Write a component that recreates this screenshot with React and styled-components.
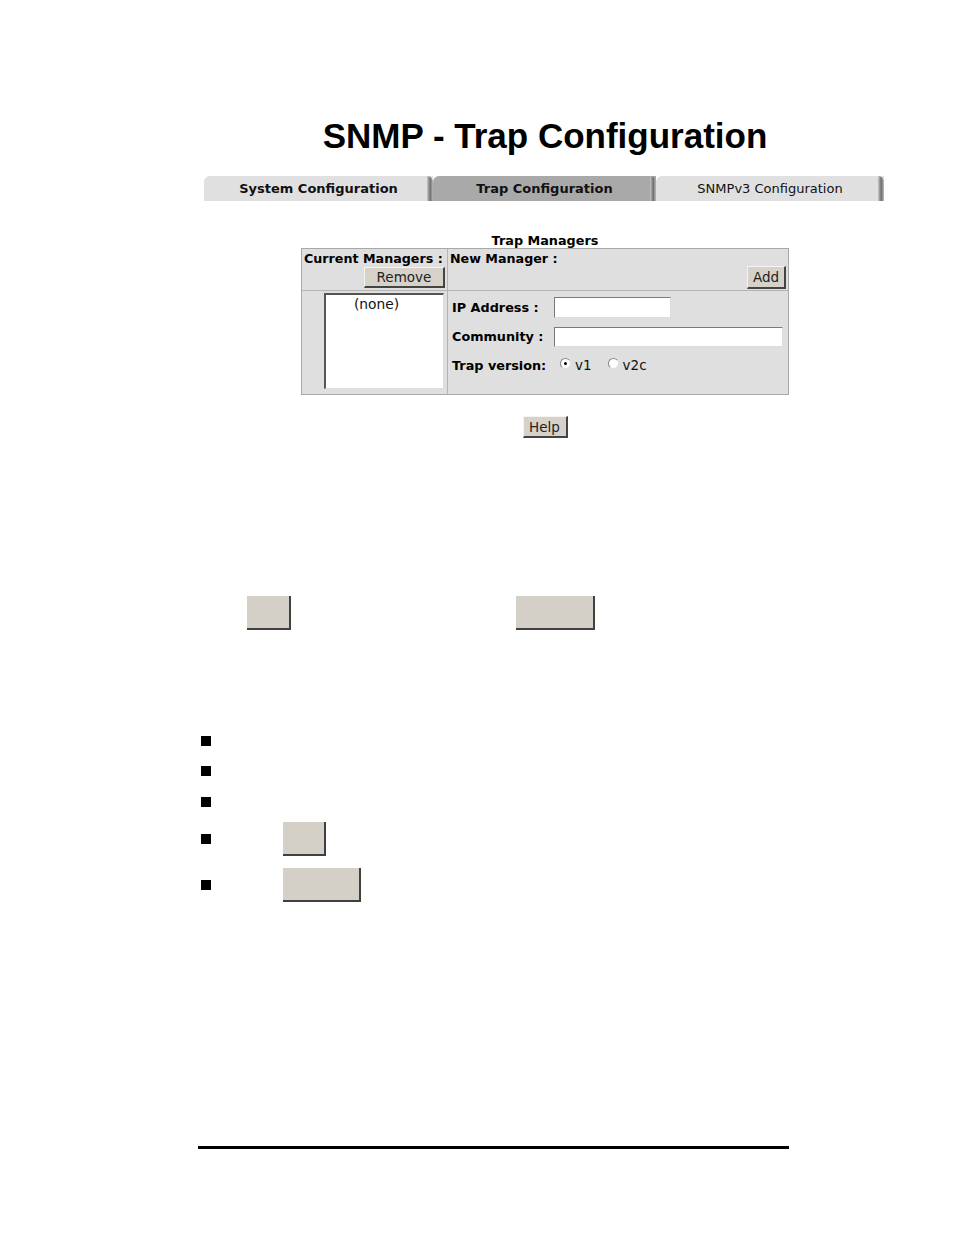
import styled, { createGlobalStyle } from "styled-components";

const GlobalStyle = createGlobalStyle`
  body {
    margin: 0;
    background: #ffffff;
    font-family: "DejaVu Sans", Verdana, sans-serif;
  }
`;

export default function App() {
  return (
    <Page>
      <GlobalStyle />
      <Main>
        <Title>SNMP - Trap Configuration</Title>
        <Tabs>
          <Tab $width={229} $bold>System Configuration</Tab>
          <Tab $width={223} $bold $active>Trap Configuration</Tab>
          <Tab $width={228}>SNMPv3 Configuration</Tab>
        </Tabs>

        <Caption>Trap Managers</Caption>
        <Panel>
          <HeadCell>
            <Label>Current Managers :</Label>
            <ButtonRow>
              <WinButton $width={81} $height={21}>Remove</WinButton>
            </ButtonRow>
          </HeadCell>
          <HeadCell $right>
            <Label>New Manager :</Label>
            <ButtonRow>
              <WinButton $width={39} $height={23}>Add</WinButton>
            </ButtonRow>
          </HeadCell>
          <BodyCell>
            <ListBox>(none)</ListBox>
          </BodyCell>
          <BodyCell $right>
            <FormRow $height={29}>
              <FieldLabel>IP Address :</FieldLabel>
              <TextBox $width={117} $height={21} />
            </FormRow>
            <FormRow $height={29}>
              <FieldLabel>Community :</FieldLabel>
              <TextBox $width={229} $height={20} />
            </FormRow>
            <FormRow $height={28}>
              <FieldLabel $narrow>Trap version:</FieldLabel>
              <Radio $checked />
              <RadioText>v1</RadioText>
              <Radio />
              <RadioText>v2c</RadioText>
            </FormRow>
          </BodyCell>
        </Panel>

        <HelpRow>
          <WinButton $width={45} $height={22}>Help</WinButton>
        </HelpRow>
      </Main>

      <BlankRow>
        <BlankButton $width={44} />
        <BlankButton $width={79} />
      </BlankRow>

      <BulletList>
        <BulletItem $height={26}><Bullet /></BulletItem>
        <BulletItem $height={34}><Bullet /></BulletItem>
        <BulletItem $height={28}><Bullet /></BulletItem>
        <BulletItem $height={46}>
          <Bullet />
          <BlankButton $width={43} />
        </BulletItem>
        <BulletItem $height={46}>
          <Bullet />
          <BlankButton $width={78} />
        </BulletItem>
      </BulletList>

      <FooterRule />
    </Page>
  );
}

const Page = styled.div`
  width: 954px;
  min-height: 1235px;
  display: flex;
  flex-direction: column;
`;

const Main = styled.div`
  margin-left: 204px;
  width: 682px;
  display: flex;
  flex-direction: column;
  align-items: center;
`;

const Title = styled.h1`
  margin: 116px 0 0;
  font-family: "Liberation Sans", Arial, sans-serif;
  font-size: 35px;
  line-height: 40px;
  font-weight: 700;
  color: #000;
`;

const Tabs = styled.div`
  align-self: flex-start;
  margin-top: 20px;
  display: flex;
  width: 680px;
  height: 25px;
`;

const Tab = styled.div`
  position: relative;
  width: ${(p) => p.$width}px;
  height: 25px;
  background: ${(p) => (p.$active ? "#a9a9a9" : "#e0e0e0")};
  border-top-left-radius: 6px;
  display: flex;
  align-items: center;
  justify-content: center;
  font-size: 13px;
  font-weight: ${(p) => (p.$bold ? 700 : 400)};
  color: #111;
  box-sizing: border-box;

  &::after {
    content: "";
    position: absolute;
    right: 0;
    top: 0;
    width: 6px;
    height: 25px;
    border-top-right-radius: 7px;
    background: linear-gradient(to right, #c8c8c8, #6e6e6e 55%, #bdbdbd);
  }
`;

const Caption = styled.div`
  margin-top: 33px;
  font-size: 12.8px;
  font-weight: 700;
  line-height: 14px;
  color: #000;
`;

const Panel = styled.div`
  width: 488px;
  box-sizing: border-box;
  display: grid;
  grid-template-columns: 145px 1fr;
  grid-template-rows: 42px 103px;
  background: #dfdfdf;
  border: 1px solid #a8a8a8;
`;

const HeadCell = styled.div`
  display: flex;
  flex-direction: column;
  justify-content: space-between;
  padding: 2px;
  border-bottom: 1px solid #b4b4b4;
  border-left: ${(p) => (p.$right ? "1px solid #b4b4b4" : "none")};
  box-sizing: border-box;
`;

const BodyCell = styled.div`
  display: flex;
  flex-direction: column;
  align-items: ${(p) => (p.$right ? "stretch" : "flex-end")};
  padding: ${(p) => (p.$right ? "2px 0 0 4px" : "2px 3px 0 0")};
  border-left: ${(p) => (p.$right ? "1px solid #b4b4b4" : "none")};
  box-sizing: border-box;
`;

const Label = styled.div`
  font-size: 12.7px;
  font-weight: 700;
  line-height: 15px;
  color: #000;
  white-space: nowrap;
`;

const ButtonRow = styled.div`
  display: flex;
  justify-content: flex-end;
`;

const WinButton = styled.button`
  width: ${(p) => p.$width}px;
  height: ${(p) => p.$height}px;
  padding: 0;
  font-family: "DejaVu Sans", Verdana, sans-serif;
  font-size: 13.5px;
  color: #222;
  background: #d6d2ca;
  border-style: solid;
  border-width: 1px 2px 2px 1px;
  border-color: #f4f4f4 #444 #444 #f4f4f4;
  box-sizing: border-box;
  cursor: pointer;
`;

const ListBox = styled.div`
  width: 120px;
  height: 96px;
  box-sizing: border-box;
  background: #fff;
  border-style: solid;
  border-width: 2px 1px 1px 2px;
  border-color: #555 #ddd #ddd #555;
  text-align: center;
  font-size: 13.8px;
  line-height: 17px;
  padding: 1px 16px 0 0;
  color: #111;
`;

const FormRow = styled.div`
  display: flex;
  align-items: center;
  height: ${(p) => p.$height}px;
`;

const FieldLabel = styled.div`
  width: ${(p) => (p.$narrow ? "106px" : "102px")};
  font-size: 12.8px;
  font-weight: 700;
  color: #000;
  white-space: nowrap;
`;

const TextBox = styled.input`
  width: ${(p) => p.$width}px;
  height: ${(p) => p.$height}px;
  box-sizing: border-box;
  background: #fff;
  border-style: solid;
  border-width: 1px;
  border-color: #7a7a7a #dcdcdc #dcdcdc #7a7a7a;
  padding: 0;
  outline: none;
`;

const Radio = styled.span`
  position: relative;
  width: 9px;
  height: 9px;
  border-radius: 50%;
  background: #fff;
  border: 1px solid #888;
  border-right-color: #ddd;
  border-bottom-color: #ddd;
  margin-left: 2px;
  margin-top: -4px;

  &::after {
    content: "";
    display: ${(p) => (p.$checked ? "block" : "none")};
    position: absolute;
    left: 3px;
    top: 3px;
    width: 3px;
    height: 3px;
    border-radius: 50%;
    background: #000;
  }
`;

const RadioText = styled.span`
  font-size: 13.5px;
  color: #111;
  margin: 0 14px 0 4px;
`;

const HelpRow = styled.div`
  margin-top: 21px;
  display: flex;
  justify-content: center;
`;

const BlankRow = styled.div`
  margin: 158px 0 0 247px;
  display: flex;
  gap: 225px;
`;

const BlankButton = styled.div`
  width: ${(p) => p.$width}px;
  height: 34px;
  box-sizing: border-box;
  background: #d4d0c8;
  border-right: 2px solid #404040;
  border-bottom: 2px solid #404040;
`;

const BulletList = styled.ul`
  list-style: none;
  margin: 98px 0 0 201px;
  padding: 0;
  display: flex;
  flex-direction: column;
`;

const BulletItem = styled.li`
  height: ${(p) => p.$height}px;
  display: flex;
  align-items: center;
  gap: 72px;
`;

const Bullet = styled.span`
  width: 10px;
  height: 10px;
  background: #000;
  flex-shrink: 0;
`;

const FooterRule = styled.div`
  margin: 238px 0 0 198px;
  width: 591px;
  height: 3px;
  background: #000;
`;
